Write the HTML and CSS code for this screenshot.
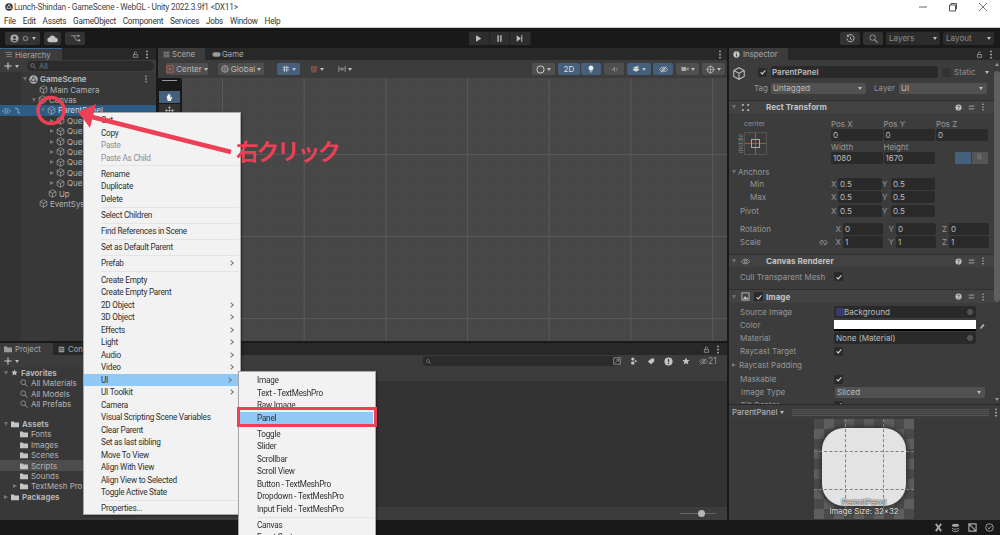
FILE: index.html
```html
<!DOCTYPE html>
<html lang="en">
<head>
<meta charset="utf-8">
<title>Lunch-Shindan - GameScene - WebGL - Unity 2022.3.9f1</title>
<link rel="stylesheet" href="styles.css">
</head>
<body>
<svg class="sprite" width="0" height="0">
  <symbol id="cube" viewBox="0 0 12 12"><path d="M6 1 10.5 3.4V8.6L6 11 1.5 8.6V3.4ZM1.5 3.4 6 5.8 10.5 3.4M6 5.8V11" fill="none" stroke="currentColor" stroke-width=".9"/></symbol>
  <symbol id="lock" viewBox="0 0 10 10"><path d="M2 5h6v4H2ZM3.4 5V2.8a1.6 1.6 0 0 1 3.2 0" fill="none" stroke="currentColor"/></symbol>
  <symbol id="dots" viewBox="0 0 4 10"><circle cx="2" cy="1.5" r="1" fill="currentColor"/><circle cx="2" cy="5" r="1" fill="currentColor"/><circle cx="2" cy="8.5" r="1" fill="currentColor"/></symbol>
  <symbol id="help" viewBox="0 0 10 10"><circle cx="5" cy="5" r="4.4" fill="currentColor"/><path d="M3.6 4a1.4 1.3 0 1 1 2 1.2C5 5.5 5 5.8 5 6.3M5 7.2v.9" fill="none" stroke="#3e3e3e"/></symbol>
  <symbol id="tune" viewBox="0 0 10 10"><path d="M1 3h5M8 3h1M1 7h1M4 7h5M7 1.5v3M3 5.5v3" fill="none" stroke="currentColor"/></symbol>
  <symbol id="folder" viewBox="0 0 10 8"><path d="M0 1h3.5l1 1H10v6H0Z" fill="currentColor"/></symbol>
  <symbol id="search" viewBox="0 0 10 10"><circle cx="4" cy="4" r="3" fill="none" stroke="currentColor"/><path d="M6.2 6.2 9.5 9.5" stroke="currentColor" stroke-width="1.2"/></symbol>
  <symbol id="check" viewBox="0 0 10 10"><path d="M2 5.4 4.1 7.4 8 2.8" fill="none" stroke="currentColor" stroke-width="1.3"/></symbol>
  <symbol id="eye" viewBox="0 0 12 8"><path d="M.6 4C3.6-.2 8.4-.2 11.4 4 8.4 8.2 3.6 8.2.6 4Z" fill="none" stroke="currentColor"/><circle cx="6" cy="4" r="1.7" fill="none" stroke="currentColor"/></symbol>
  <symbol id="target" viewBox="0 0 10 10"><circle cx="5" cy="5" r="3.8" fill="none" stroke="currentColor"/><circle cx="5" cy="5" r="1.2" fill="currentColor"/></symbol>
  <symbol id="unity" viewBox="0 0 12 12"><circle cx="6" cy="6" r="5.6" fill="currentColor"/><path d="M6 2.2 9.3 8H2.7Z" fill="none" stroke="#fff" stroke-width="1"/></symbol>
  <symbol id="star" viewBox="0 0 10 10"><path d="M5 .6 6.3 3.6 9.6 3.9 7.1 6 7.9 9.3 5 7.6 2.1 9.3 2.9 6 .4 3.9 3.7 3.6Z" fill="currentColor"/></symbol>
  <symbol id="plus" viewBox="0 0 10 10"><path d="M5 .5v9M.5 5h9" stroke="currentColor" stroke-width="1.3"/></symbol>
</svg>

<div class="window">
  <header class="titlebar">
    <svg class="title-icon"><use href="#unity"/></svg>
    <span class="title-text">Lunch-Shindan - GameScene - WebGL - Unity 2022.3.9f1 &lt;DX11&gt;</span>
    <div class="winctl">
      <svg viewBox="0 0 10 10"><path d="M1 5h8" stroke="#666"/></svg>
      <svg viewBox="0 0 10 10"><path d="M1.5 3h6v6h-6ZM3 3V1.5h5.5V7H7.500" fill="none" stroke="#555"/></svg>
      <svg viewBox="0 0 10 10"><path d="M1 1 9 9M9 1 1 9" stroke="#555" stroke-width=".8"/></svg>
    </div>
  </header>
  <nav class="menubar">
    <span>File</span><span>Edit</span><span>Assets</span><span>GameObject</span><span>Component</span><span>Services</span><span>Jobs</span><span>Window</span><span>Help</span>
  </nav>

  <div class="toolbar">
    <div class="tb-left">
      <div class="tb-btn tb-account"><svg class="i9" viewBox="0 0 10 10"><circle cx="5" cy="5" r="4.500" fill="#aaa"/><circle cx="5" cy="4" r="1.600" fill="#333"/><path d="M2.200 8a3 3 0 0 1 5.600 0" fill="#333"/></svg><svg class="i7" viewBox="0 0 10 10"><circle cx="5" cy="5" r="3" fill="none" stroke="#777" stroke-width="2"/></svg><i class="caret"></i></div>
      <div class="tb-btn tb-cloud"><svg class="i11" viewBox="0 0 12 8"><path d="M3 8a2.500 2.500 0 0 1-.4-5A3.500 3.500 0 0 1 9.300 3.200 2.400 2.400 0 0 1 9.500 8Z" fill="#c4c4c4"/></svg></div>
      <div class="tb-btn tb-vcs"><svg class="i11" viewBox="0 0 12 10"><path d="M1 2h3l3 5h3M4 2h5" fill="none" stroke="#999"/><circle cx="10" cy="7" r="1.300" fill="#999"/><circle cx="9.500" cy="2" r="1.200" fill="#999"/></svg></div>
    </div>
    <div class="tb-play">
      <div><svg class="i7" viewBox="0 0 10 10"><path d="M1.500 .5 9 5 1.500 9.500Z" fill="#c0c0c0"/></svg></div>
      <div><svg class="i7" viewBox="0 0 10 10"><path d="M2 .5h2v9H2ZM6 .5h2v9H6Z" fill="#c0c0c0"/></svg></div>
      <div><svg class="i7" viewBox="0 0 10 10"><path d="M1 .5 7 5 1 9.500ZM7.500 .5h1.500v9H7.500Z" fill="#c0c0c0"/></svg></div>
    </div>
    <div class="tb-right">
      <div class="tb-btn tb-hist"><svg class="i9" viewBox="0 0 10 10"><path d="M1.800 2.200A4 4 0 1 1 1 5M1.500 .8V2.700H3.400M5 3v2.300L6.500 6.300" fill="none" stroke="#c4c4c4"/></svg></div>
      <div class="tb-btn tb-hist"><svg class="i9 muted"><use href="#search"/></svg></div>
      <div class="tb-btn tb-drop tb-layers"><span>Layers</span><i class="caret"></i></div>
      <div class="tb-btn tb-drop tb-layout"><span>Layout</span><i class="caret"></i></div>
    </div>
  </div>

  <main class="workspace">
    <div class="left">
      <div class="top">
        <section class="hierarchy">
          <div class="tabstrip">
            <div class="tab tab-active tab-hier"><svg class="i7 muted" viewBox="0 0 10 10"><path d="M0 2h10M2 5h8M2 8h8" stroke="currentColor"/></svg><span>Hierarchy</span></div>
            <svg class="i7 strip-lock"><use href="#lock"/></svg><svg class="strip-dots"><use href="#dots"/></svg>
          </div>
          <div class="subbar hier-bar">
            <svg class="i8 plus"><use href="#plus"/></svg><i class="caret"></i>
            <div class="searchbox"><svg class="i6 muted"><use href="#search"/></svg><span>All</span></div>
          </div>
          <ul class="tree">
            <li class="ind1 row-bold"><i class="tri-d"></i><svg class="i9 bright" viewBox="0 0 10 10"><circle cx="5" cy="5" r="4.700" fill="currentColor"/><path d="M5 1.800 8 7H2Z" fill="none" stroke="#383838"/></svg><span>GameScene</span><svg class="row-dots"><use href="#dots"/></svg></li>
            <li class="ind2"><svg class="i9"><use href="#cube"/></svg><span>Main Camera</span></li>
            <li class="ind2b"><i class="tri-d"></i><svg class="i9"><use href="#cube"/></svg><span>Canvas</span></li>
            <li class="ind3 selected"><svg class="vis" viewBox="0 0 22 8"><use href="#eye" width="9" height="8" x="1"/><path d="M14 1l3 1v4h2" stroke="currentColor" fill="none"/></svg><i class="tri-d"></i><svg class="i9"><use href="#cube"/></svg><span>ParentPanel</span></li>
            <li class="ind4"><i class="tri-r"></i><svg class="i9"><use href="#cube"/></svg><span>Question1</span></li>
            <li class="ind4"><i class="tri-r"></i><svg class="i9"><use href="#cube"/></svg><span>Question2</span></li>
            <li class="ind4"><i class="tri-r"></i><svg class="i9"><use href="#cube"/></svg><span>Question3</span></li>
            <li class="ind4"><i class="tri-r"></i><svg class="i9"><use href="#cube"/></svg><span>Question4</span></li>
            <li class="ind4"><i class="tri-r"></i><svg class="i9"><use href="#cube"/></svg><span>Question5</span></li>
            <li class="ind4"><i class="tri-r"></i><svg class="i9"><use href="#cube"/></svg><span>Question6</span></li>
            <li class="ind4"><i class="tri-r"></i><svg class="i9"><use href="#cube"/></svg><span>Question7</span></li>
            <li class="ind5"><svg class="i9"><use href="#cube"/></svg><span>Up</span></li>
            <li class="ind6"><svg class="i9"><use href="#cube"/></svg><span>EventSystem</span></li>
          </ul>
        </section>

        <section class="scene">
          <div class="tabstrip">
            <div class="tab tab-active tab-scene"><svg class="i7 muted" viewBox="0 0 10 10"><path d="M3 0v10M7 0v10M0 3h10M0 7h10" stroke="currentColor"/></svg><span>Scene</span></div>
            <div class="tab tab-game"><svg class="i9 muted" viewBox="0 0 12 8"><rect x=".5" y="1" width="11" height="6" rx="3" fill="currentColor"/></svg><span>Game</span></div>
            <svg class="strip-dots"><use href="#dots"/></svg>
          </div>
          <div class="scene-bar">
            <div class="sb-btn sb-center"><svg class="i8" viewBox="0 0 10 10"><rect x="1" y="1" width="8" height="8" fill="none" stroke="#c0604a"/><circle cx="5" cy="5" r="1.500" fill="#c0604a"/></svg><span>Center</span><i class="caret"></i></div>
            <div class="sb-btn sb-global"><svg class="i8" viewBox="0 0 10 10"><circle cx="5" cy="5" r="4" fill="none" stroke="#bbb"/><path d="M1 5h8M5 1v8" stroke="#bbb" stroke-width=".6"/></svg><span>Global</span><i class="caret"></i></div>
            <div class="sb-btn sb-blue sb-snap"><svg class="i8" viewBox="0 0 10 10"><path d="M1 3h8M1 6h8M3 1v8M6 1v8" stroke="#ddd" stroke-width=".9"/></svg><i class="caret"></i></div>
            <div class="sb-btn sb-snap2"><svg class="i8" viewBox="0 0 10 10"><path d="M2 2h2v4a1 1 0 0 0 2 0V2h2v4a3 3 0 0 1-6 0Z" fill="none" stroke="#b9604c"/></svg><i class="caret"></i></div>
            <div class="sb-btn sb-snap3"><svg class="i8" viewBox="0 0 10 10"><path d="M1 1v8M9 1v8M4 3v4M6 3v4M1 5h8" stroke="#999"/></svg><i class="caret"></i></div>
            <div class="sb-right">
              <div class="sb-btn sb-w23"><svg class="i9" viewBox="0 0 10 10"><circle cx="5" cy="5" r="4" fill="none" stroke="#ddd"/></svg><i class="caret"></i></div>
              <div class="sb-btn sb-blue sb-2d"><span>2D</span></div>
              <div class="sb-btn sb-blue sb-w20"><svg class="i8" viewBox="0 0 10 10"><path d="M5 .5a3 3 0 0 1 2 5.300V7H3V5.800A3 3 0 0 1 5 .5ZM3.500 8.200h3v1h-3Z" fill="#eee"/></svg></div>
              <div class="sb-btn sb-w20 sb-gap"><svg class="i7" viewBox="0 0 10 10"><path d="M1 5h2l2-3v6M7 3l2 2-2 2" fill="none" stroke="#aaa"/></svg></div>
              <div class="sb-btn sb-blue sb-w24 sb-gap"><svg class="i8" viewBox="0 0 10 10"><path d="M1 6 5 4l4 2-4 2ZM1 4 5 2l4 2M7 .5v3M5.500 2h3" fill="#ddd" stroke="#ddd" stroke-width=".5"/></svg><i class="caret"></i></div>
              <div class="sb-btn sb-blue sb-w20 sb-gap2"><svg class="i9" viewBox="0 0 12 8"><use href="#eye" width="12" height="8"/><path d="M2 8 10 0" stroke="#ddd"/></svg></div>
              <div class="sb-btn sb-w23 sb-gap"><svg class="i8" viewBox="0 0 10 10"><path d="M.5 2.500h6v5h-6ZM7.500 4 9.500 3v4l-2-1Z" fill="#aaa"/></svg><i class="caret"></i></div>
              <div class="sb-btn sb-w23 sb-gap"><svg class="i9" viewBox="0 0 10 10"><circle cx="5" cy="5" r="3.500" fill="none" stroke="#bbb"/><path d="M5 0v10M0 5h10" stroke="#bbb" stroke-width=".7"/></svg><i class="caret"></i></div>
            </div>
          </div>
          <div class="viewport">
            <div class="palette">
              <div class="grip"></div>
              <div class="pal-btn pal-on"><svg class="i11" viewBox="0 0 10 10"><path d="M2 5V3.500a.6.6 0 0 1 1 0V5V1.800a.6.600 0 0 1 1 0V5V1.200a.6.600 0 0 1 1 0V5V2a.6.600 0 0 1 1 0V5.500L7 4.500a.6.600 0 0 1 1 .6L6.500 9H3Z" fill="#eee"/></svg></div>
              <div class="pal-btn"><svg class="i9" viewBox="0 0 10 10"><path d="M5 .5v9M.5 5h9M5 .5 4 2h2ZM5 9.500 4 8h2ZM.5 5 2 4v2ZM9.500 5 8 4v2Z" stroke="#bbb" stroke-width=".7" fill="#bbb"/></svg></div>
            </div>
          </div>
        </section>
      </div>

      <section class="project">
        <div class="tabstrip">
          <div class="tab tab-active tab-proj"><svg class="i8 muted"><use href="#folder"/></svg><span>Project</span></div>
          <div class="tab tab-console"><svg class="i7 muted" viewBox="0 0 10 10"><rect x="1" y="1" width="8" height="8" fill="currentColor"/><path d="M2 3.500h6M2 6h6" stroke="#282828"/></svg><span>Console</span></div>
          <svg class="i7 strip-lock"><use href="#lock"/></svg><svg class="strip-dots"><use href="#dots"/></svg>
        </div>
        <div class="subbar proj-bar">
          <svg class="i8 plus"><use href="#plus"/></svg><i class="caret"></i>
          <div class="proj-search"><svg class="i5 muted"><use href="#search"/></svg></div>
          <div class="proj-tools">
            <svg class="i8 muted" viewBox="0 0 10 10"><rect x="1" y="1" width="8" height="8" fill="none" stroke="currentColor"/><path d="M3 7 7 3M4.500 3H7v2.500" fill="none" stroke="currentColor"/></svg>
            <svg class="i8 tool" viewBox="0 0 10 10"><circle cx="3.500" cy="2.500" r="2" fill="currentColor"/><rect x="1.500" y="5.500" width="4" height="4" rx="1.500" fill="currentColor"/><path d="M6 3l3.500 3H6Z" fill="currentColor"/></svg>
            <svg class="i8 tool" viewBox="0 0 10 10"><path d="M1 5.500 5.500 2H9v3.500L5 9Z" fill="currentColor"/></svg>
            <svg class="i9 tool" viewBox="0 0 10 10"><circle cx="5" cy="5" r="4.500" fill="currentColor"/><path d="M5 2.200v3.500M5 6.800v1" stroke="#3c3c3c" stroke-width="1.300"/></svg>
            <svg class="i8 muted tool"><use href="#star"/></svg>
            <span class="hidden-count"><svg class="i9 muted" viewBox="0 0 12 8"><use href="#eye" width="12" height="8"/><path d="M2 8 10 0" stroke="currentColor"/></svg>21</span>
          </div>
        </div>
        <div class="proj-body">
          <ul class="ptree">
            <li class="p0 row-bold"><i class="tri-d"></i><svg class="i7 bright"><use href="#star"/></svg><span>Favorites</span></li>
            <li class="p1"><svg class="i8 muted"><use href="#search"/></svg><span>All Materials</span></li>
            <li class="p1"><svg class="i8 muted"><use href="#search"/></svg><span>All Models</span></li>
            <li class="p1"><svg class="i8 muted"><use href="#search"/></svg><span>All Prefabs</span></li>
            <li class="spacer"></li>
            <li class="p0 row-bold"><i class="tri-d"></i><svg class="i8 bright"><use href="#folder"/></svg><span>Assets</span></li>
            <li class="p1"><svg class="i8 bright"><use href="#folder"/></svg><span>Fonts</span></li>
            <li class="p1"><svg class="i8 bright"><use href="#folder"/></svg><span>Images</span></li>
            <li class="p1"><svg class="i8 bright"><use href="#folder"/></svg><span>Scenes</span></li>
            <li class="p1 psel"><svg class="i8 bright"><use href="#folder"/></svg><span>Scripts</span></li>
            <li class="p1"><svg class="i8 bright"><use href="#folder"/></svg><span>Sounds</span></li>
            <li class="p1t"><i class="tri-r"></i><svg class="i8 bright"><use href="#folder"/></svg><span>TextMesh Pro</span></li>
            <li class="p0 row-bold"><i class="tri-r"></i><svg class="i8 bright"><use href="#folder"/></svg><span>Packages</span></li>
          </ul>
          <div class="pmain">
            <div class="crumb"></div>
            <div class="pfiles"></div>
            <div class="pfoot"><div class="slider"><i></i></div></div>
          </div>
        </div>
      </section>
    </div>

    <aside class="inspector">
      <div class="tabstrip">
        <div class="tab tab-active tab-insp"><svg class="i7 bright" viewBox="0 0 10 10"><circle cx="5" cy="5" r="4.500" fill="currentColor"/><path d="M5 2v1M5 4.300V8" stroke="#3c3c3c" stroke-width="1.300"/></svg><span>Inspector</span></div>
        <svg class="i7 strip-lock"><use href="#lock"/></svg><svg class="strip-dots"><use href="#dots"/></svg>
      </div>
      <div class="insp-main">
        <div class="insp-scroll">
          <div class="obj-head">
            <svg class="obj-cube"><use href="#cube"/></svg>
            <div class="obj-rows">
              <div class="obj-row">
                <span class="chk"><svg><use href="#check"/></svg></span>
                <div class="field f-name">ParentPanel</div>
                <span class="chk chk-off"></span><span class="static">Static</span><i class="caret"></i>
              </div>
              <div class="obj-row obj-row2">
                <span class="lbl-tag">Tag</span><div class="select s-tag"><span>Untagged</span><i class="caret"></i></div>
                <span class="lbl-layer">Layer</span><div class="select s-layer"><span>UI</span><i class="caret"></i></div>
              </div>
            </div>
          </div>

          <div class="comp-head">
            <i class="tri-d"></i><svg class="i9 comp-ic" viewBox="0 0 10 10"><path d="M1 1h2v2H1ZM7 1h2v2H7ZM1 7h2v2H1ZM7 7h2v2H7Z" fill="currentColor"/></svg>
            <b class="comp-title">Rect Transform</b>
            <span class="comp-tools"><svg class="i7"><use href="#help"/></svg><svg class="i7"><use href="#tune"/></svg><svg class="strip-dots"><use href="#dots"/></svg></span>
          </div>
          <div class="rect-top">
            <div class="anchor">
              <span class="a-center">center</span>
              <div class="a-body"><span class="a-middle">middle</span>
                <div class="a-box"><i class="a-h"></i><i class="a-v"></i><i class="a-in"></i></div>
              </div>
            </div>
            <div class="rect-grid">
              <span>Pos X</span><span>Pos Y</span><span>Pos Z</span>
              <div class="field">0</div><div class="field">0</div><div class="field">0</div>
              <span>Width</span><span>Height</span><span></span>
              <div class="field">1080</div><div class="field">1670</div>
              <div class="bp-btns"><i class="bp-a"></i><i class="bp-b">R</i></div>
            </div>
          </div>

          <div class="prop anchors-label"><i class="tri-d"></i><span>Anchors</span></div>
          <div class="prop prop-sub"><span class="plabel">Min</span><div class="vec2"><em>X</em><div class="field">0.5</div><em>Y</em><div class="field">0.5</div></div></div>
          <div class="prop prop-sub"><span class="plabel">Max</span><div class="vec2"><em>X</em><div class="field">0.5</div><em>Y</em><div class="field">0.5</div></div></div>
          <div class="prop prop-pivot"><span class="plabel">Pivot</span><div class="vec2"><em>X</em><div class="field">0.5</div><em>Y</em><div class="field">0.5</div></div></div>
          <div class="prop prop-rot"><span class="plabel">Rotation</span><div class="vec3"><em>X</em><div class="field">0</div><em>Y</em><div class="field">0</div><em>Z</em><div class="field">0</div></div></div>
          <div class="prop"><span class="plabel">Scale</span><svg class="link" viewBox="0 0 10 8"><path d="M4 2H3a2 2 0 0 0 0 4h1M6 2h1a2 2 0 0 1 0 4H6M3 1 7 7" fill="none" stroke="currentColor"/></svg><div class="vec3"><em>X</em><div class="field">1</div><em>Y</em><div class="field">1</div><em>Z</em><div class="field">1</div></div></div>

          <div class="comp-head comp-canvas">
            <i class="tri-d"></i><svg class="i9 comp-ic" viewBox="0 0 12 8"><use href="#eye" width="12" height="8"/></svg>
            <b class="comp-title">Canvas Renderer</b>
            <span class="comp-tools"><svg class="i7"><use href="#help"/></svg><svg class="i7"><use href="#tune"/></svg><svg class="strip-dots"><use href="#dots"/></svg></span>
          </div>
          <div class="prop prop-cull"><span class="plabel">Cull Transparent Mesh</span><span class="chk"><svg><use href="#check"/></svg></span></div>

          <div class="comp-head comp-image">
            <i class="tri-d"></i><svg class="i9 comp-ic" viewBox="0 0 10 10"><rect x="1" y="1" width="8" height="8" fill="none" stroke="currentColor"/><path d="M2 8 4.500 4.500 6 6.500 7 5.500 8 8Z" fill="currentColor"/></svg>
            <span class="chk chk-comp"><svg><use href="#check"/></svg></span>
            <b class="comp-title comp-title2">Image</b>
            <span class="comp-tools"><svg class="i7"><use href="#help"/></svg><svg class="i7"><use href="#tune"/></svg><svg class="strip-dots"><use href="#dots"/></svg></span>
          </div>
          <div class="prop prop-img"><span class="plabel">Source Image</span><div class="field f-wide"><i class="sprite-ic"></i>Background<svg class="i6 f-pick"><use href="#target"/></svg></div></div>
          <div class="prop prop-img"><span class="plabel">Color</span><div class="color"></div><svg class="i7 dropper" viewBox="0 0 10 10"><path d="M1 9 6 3l2 1.500L3 9.500Z" fill="#bbb"/></svg></div>
          <div class="prop prop-img"><span class="plabel">Material</span><div class="field f-wide">None (Material)<svg class="i6 f-pick"><use href="#target"/></svg></div></div>
          <div class="prop prop-img"><span class="plabel">Raycast Target</span><span class="chk"><svg><use href="#check"/></svg></span></div>
          <div class="prop prop-img prop-pad"><i class="tri-r"></i><span class="plabel">Raycast Padding</span></div>
          <div class="prop prop-img prop-mask"><span class="plabel">Maskable</span><span class="chk"><svg><use href="#check"/></svg></span></div>
          <div class="prop prop-img"><span class="plabel plabel-in">Image Type</span><div class="select s-type"><span>Sliced</span><i class="caret"></i></div></div>
          <div class="prop prop-img"><span class="plabel plabel-in">Fill Center</span><span class="chk"><svg><use href="#check"/></svg></span></div>
        </div>
        <div class="scrollbar"><i class="sb-up"></i><div class="sb-track"><div class="sb-thumb"></div></div><i class="sb-down"></i></div>
      </div>
      <div class="preview-bar"><span>ParentPanel</span><i class="caret"></i><div class="grab"></div><svg class="strip-dots"><use href="#dots"/></svg></div>
      <div class="preview">
        <div class="checker">
          <div class="thumb"></div>
          <i class="d-v d-v1"></i><i class="d-v d-v2"></i><i class="d-h d-h1"></i><i class="d-h d-h2"></i>
          <p class="cap">ParentPanel<br>Image Size: 32x32</p>
        </div>
      </div>
    </aside>
  </main>

  <footer class="statusbar">
    <svg class="i9" viewBox="0 0 10 10"><path d="M2 1 8 9M8 1 2 9" stroke="currentColor" stroke-width="2"/></svg>
    <svg class="i9" viewBox="0 0 10 10"><ellipse cx="5" cy="2.500" rx="4" ry="1.800" fill="currentColor"/><path d="M1 5.500c1 2 7 2 8 0M1 8c1 2 7 2 8 0" fill="none" stroke="currentColor"/></svg>
    <svg class="i9" viewBox="0 0 10 10"><path d="M1 1h8v8H1ZM1 1 9 9" fill="none" stroke="currentColor" stroke-width="1.300"/></svg>
    <svg class="i9" viewBox="0 0 10 10"><circle cx="5" cy="5" r="4.200" fill="none" stroke="currentColor"/><path d="M3 5 4.500 6.500 7 3.500" fill="none" stroke="currentColor"/></svg>
  </footer>

  <div class="menu">
    <div class="mi">Cut</div>
    <div class="mi">Copy</div>
    <div class="mi off">Paste</div>
    <div class="mi off">Paste As Child</div>
    <hr>
    <div class="mi">Rename</div>
    <div class="mi">Duplicate</div>
    <div class="mi">Delete</div>
    <hr>
    <div class="mi">Select Children</div>
    <hr>
    <div class="mi">Find References in Scene</div>
    <hr>
    <div class="mi">Set as Default Parent</div>
    <hr>
    <div class="mi sub">Prefab</div>
    <hr>
    <div class="mi">Create Empty</div>
    <div class="mi">Create Empty Parent</div>
    <div class="mi sub">2D Object</div>
    <div class="mi sub">3D Object</div>
    <div class="mi sub">Effects</div>
    <div class="mi sub">Light</div>
    <div class="mi sub">Audio</div>
    <div class="mi sub">Video</div>
    <div class="mi sub hot">UI</div>
    <div class="mi sub">UI Toolkit</div>
    <div class="mi">Camera</div>
    <div class="mi">Visual Scripting Scene Variables</div>
    <div class="mi">Clear Parent</div>
    <div class="mi">Set as last sibling</div>
    <div class="mi">Move To View</div>
    <div class="mi">Align With View</div>
    <div class="mi">Align View to Selected</div>
    <div class="mi">Toggle Active State</div>
    <hr>
    <div class="mi">Properties...</div>
  </div>

  <div class="menu submenu">
    <div class="mi">Image</div>
    <div class="mi">Text - TextMeshPro</div>
    <div class="mi">Raw Image</div>
    <div class="mi hot">Panel</div>
    <hr>
    <div class="mi">Toggle</div>
    <div class="mi">Slider</div>
    <div class="mi">Scrollbar</div>
    <div class="mi">Scroll View</div>
    <div class="mi">Button - TextMeshPro</div>
    <div class="mi">Dropdown - TextMeshPro</div>
    <div class="mi">Input Field - TextMeshPro</div>
    <hr>
    <div class="mi">Canvas</div>
    <div class="mi">Event System</div>
  </div>

  <div class="panel-mark"></div>
  <svg class="annot" viewBox="0 0 1000 535">
    <circle cx="51" cy="110.500" r="13" fill="none" stroke="#ef3f56" stroke-width="3.500"/>
    <path d="M231 152 92 117" stroke="#ef3f56" stroke-width="4.500" fill="none"/>
    <path d="M78 112 96 104 90 128Z" fill="#ef3f56"/>
  </svg>
  <div class="annot-text">右クリック</div>
</div>
</body>
</html>
```
FILE: styles.css
```css
* { box-sizing: border-box; }
html, body { margin: 0; padding: 0; background: #191919; }
body { width: 1000px; height: 535px; overflow: hidden; font-family: "Inter", "Liberation Sans", sans-serif; font-size: 8px; color: #bdbdbd; }
ul { list-style: none; margin: 0; padding: 0; }
i, em, b { font-style: normal; }
svg { display: block; flex: none; }
.sprite { position: absolute; }

.window { position: relative; width: 1000px; height: 535px; overflow: hidden; display: flex; flex-direction: column; filter: blur(.3px); }

.i5 { width: 5px; height: 5px; } .i6 { width: 6px; height: 6px; } .i7 { width: 7px; height: 7px; } .i8 { width: 8px; height: 8px; }
.i9 { width: 9px; height: 9px; } .i11 { width: 11px; height: 9px; }
.muted { color: #9a9a9a; } .bright { color: #c4c4c4; }

.titlebar { height: 15px; flex: none; background: #fff; display: flex; align-items: center; padding: 0 0 1px 5px; color: #444; font-family: Roboto, "Liberation Sans", sans-serif; font-size: 8.300px; letter-spacing: -.2px; }
.title-icon { width: 8px; height: 8px; color: #333; margin-right: 1px; }
.title-text { flex: 1; white-space: nowrap; }
.winctl { display: flex; gap: 20px; padding-right: 12px; }
.winctl svg { width: 10px; height: 10px; }

.menubar { height: 13px; flex: none; background: #fff; border-bottom: 1px solid #ccc; display: flex; padding-left: 4px; gap: 6.800px; color: #333; font-family: Roboto, "Liberation Sans", sans-serif; font-size: 8.200px; letter-spacing: -.22px; line-height: 13px; }

.toolbar { height: 20px; flex: none; background: #191919; display: flex; align-items: center; position: relative; }
.tb-left, .tb-right { display: flex; gap: 4px; }
.tb-left { padding-left: 5px; }
.tb-right { margin-left: auto; padding-right: 6px; gap: 3px; }
.tb-btn { height: 13px; background: #333; border-radius: 2px; display: flex; align-items: center; justify-content: center; gap: 3px; }
.tb-account { width: 35px; } .tb-cloud { width: 17px; } .tb-vcs { width: 20px; }
.tb-hist { width: 20px; }
.tb-drop { justify-content: space-between; padding: 0 3px; color: #8c8c8c; font-size: 8.100px; background: #2c2c2c; }
.tb-layers { width: 54px; } .tb-layout { width: 51px; }
.tb-play { display: flex; height: 13px; margin-left: 384px; }
.tb-play div { width: 20.500px; background: #2e2e2e; display: flex; align-items: center; justify-content: center; border-right: 1px solid #222; }
.caret { display: inline-block; flex: none; width: 0; height: 0; border: 2.500px solid transparent; border-top: 3px solid #bdbdbd; border-bottom: 0; }

.workspace { height: 472px; flex: none; display: flex; gap: 2px; background: #191919; }
.left { width: 727px; flex: none; display: flex; flex-direction: column; gap: 2px; }
.top { height: 293px; flex: none; display: flex; gap: 2px; }

.tabstrip { height: 12px; flex: none; background: #282828; display: flex; align-items: stretch; position: relative; }
.tab { display: flex; align-items: center; gap: 3px; color: #a8a8a8; font-size: 7.800px; }
.tab-active { background: #3c3c3c; }
.tab-hier { width: 62px; padding-left: 5px; border-top: 1px solid #3a6a9a; }
.tab-scene { width: 47px; padding-left: 5px; gap: 2px; }
.tab-game { width: 40px; padding-left: 7px; gap: 1px; }
.tab-proj { width: 53px; padding-left: 4px; }
.tab-console { width: 60px; padding-left: 5px; }
.tab-insp { width: 59px; padding-left: 4px; }
.strip-lock { margin-left: auto; align-self: center; color: #aaa; }
.strip-dots { width: 4px; height: 9px; color: #b0b0b0; align-self: center; margin: 0 2px 0 6px; }
.tabstrip > .strip-dots:only-of-type { margin-left: auto; margin-right: 5px; }
.tabstrip .strip-lock + .strip-dots { margin: 0 7px 0 6px; }

.subbar { height: 12px; flex: none; background: #3c3c3c; display: flex; align-items: center; }
.plus { margin-left: 4px; color: #ccc; }
.subbar .caret { margin-left: 3px; }

.hierarchy { width: 156px; flex: none; display: flex; flex-direction: column; background: #383838; }
.searchbox { margin-left: 8px; width: 127px; height: 10px; background: #2b2b2b; border-radius: 5px; display: flex; align-items: center; gap: 3px; padding-left: 3px; color: #777; font-size: 7.500px; }
.tree { padding-top: 1.900px; flex: 1; background: linear-gradient(90deg, #333 21px, #383838 21px); }
.tree li, .ptree li { height: 10.420px; display: flex; align-items: center; gap: 2px; white-space: nowrap; color: #b4b4b4; font-size: 7.900px; position: relative; }
.tree svg.i9 { color: #b0b0b0; width: 9px; height: 9px; }
.row-bold { font-weight: 700; }
.row-dots { width: 4px; height: 8px; margin-left: auto; margin-right: 8px; color: #bbb; }
.tri-d, .tri-r { display: inline-block; flex: none; width: 0; height: 0; border-style: solid; border-color: transparent; }
.tri-d { border-width: 4px 2.500px 0; border-top-color: #6f6f6f; }
.tri-r { border-width: 2.500px 0 2.500px 4px; border-left-color: #7a7a7a; }
.ind1 { padding-left: 23px; }
.ind2 { padding-left: 39px; }
.ind2b { padding-left: 32px; }
.ind3 { padding-left: 41px; }
.ind4 { padding-left: 50px; }
.ind5 { padding-left: 48px; }
.ind6 { padding-left: 39px; }
.tree .selected { background: #2c5d87; color: #d6d6d6; }
.vis { position: absolute; left: 1px; top: 1.500px; width: 22px; height: 8px; color: #8fa8bc; }

.scene { flex: 1; display: flex; flex-direction: column; min-width: 0; }
.scene-bar { height: 18px; flex: none; background: #3c3c3c; display: flex; align-items: center; padding-left: 8px; }
.sb-btn { height: 12.500px; background: #4f4f4f; border-radius: 2px; display: flex; align-items: center; justify-content: center; gap: 2px; color: #b8b8b8; font-size: 8.100px; }
.sb-blue { background: #46607c; color: #ddd; }
.sb-center { width: 42px; }
.sb-global { width: 46px; margin-left: 10px; }
.sb-snap { width: 23px; margin-left: 13px; }
.sb-snap2 { width: 23px; margin-left: 5px; background: #3c3c3c; }
.sb-snap3 { width: 23px; margin-left: 5px; background: #3c3c3c; }
.sb-right { margin-left: auto; display: flex; padding-right: 2px; }
.sb-w23 { width: 23px; } .sb-w20 { width: 20px; } .sb-w24 { width: 24px; } .sb-2d { width: 23px; margin-left: 3px; border-right: 1px solid #3c3c3c; }
.sb-gap { margin-left: 3px; } .sb-gap2 { margin-left: 2px; }
.viewport { flex: 1; position: relative; background-color: #474747;
  background-image:
    linear-gradient(90deg, #585858 1px, transparent 1px),
    linear-gradient(#585858 1px, transparent 1px),
    linear-gradient(90deg, #494949 1px, transparent 1px),
    linear-gradient(#494949 1px, transparent 1px);
  background-size: 81.700px 100%, 100% 82px, 16.340px 100%, 100% 16.400px;
  background-position: 64px 0, 0 76px, 64px 0, 0 76px; }
.palette { margin-left: -1px; width: 25px; height: 60px; background: #191919; border-radius: 2px; padding: 1px 2px; }
.grip { height: 11px; margin: 1px 3px 0; border-top: 1px solid #999; }
.pal-btn { height: 12px; display: flex; align-items: center; justify-content: center; background: #333; margin-bottom: 1px; }
.pal-on { background: #46607c; }

.project { flex: 1; display: flex; flex-direction: column; }
.proj-bar { position: relative; }
.proj-search { margin-left: 404px; width: 196px; height: 10px; background: #2b2b2b; border-radius: 3px; display: flex; align-items: center; padding-left: 3px; }
.proj-tools { display: flex; align-items: center; margin-left: -6px; gap: 9px; padding-left: 0; color: #c0c0c0; flex: 1; }
.tool { color: #c4c4c4; }
.hidden-count { display: flex; align-items: center; gap: 0; color: #999; font-size: 8.500px; }
.proj-body { flex: 1; display: flex; background: #383838; min-height: 0; }
.ptree { width: 135px; flex: none; padding-top: .600px; border-right: 0; overflow: hidden; }
.ptree li { overflow: hidden; }
.ptree li.spacer { height: 9.500px; }
.p0 { padding-left: 4px; gap: 3px !important; }
.p1 { padding-left: 20px; gap: 3px !important; }
.p1t { padding-left: 13px; gap: 3px !important; }
.psel { background: #4d4d4d; }
.pmain { flex: 1; display: flex; flex-direction: column; }
.crumb { height: 14px; flex: none; background: #3c3c3c; }
.pfiles { flex: 1; background: #333; }
.pfoot { height: 13px; flex: none; background: #3c3c3c; display: flex; align-items: center; justify-content: flex-end; padding-right: 11px; }
.slider { width: 36px; height: 1px; background: #666; position: relative; }
.slider i { position: absolute; left: 18px; top: -3px; width: 7px; height: 7px; border-radius: 50%; background: #b4b4b4; }

.inspector { flex: 1; display: flex; flex-direction: column; background: #3c3c3c; min-width: 0; }
.insp-main { height: 344px; flex: none; display: flex; overflow: hidden; }
.insp-scroll { flex: 1; min-width: 0; padding-right: 0; overflow: hidden; }
.scrollbar { width: 6px; flex: none; display: flex; flex-direction: column; background: #3c3c3c; align-items: center; }
.sb-up, .sb-down { width: 0; height: 0; border: 2.500px solid transparent; flex: none; margin: 3px 0; }
.sb-up { border-bottom: 3px solid #999; border-top: 0; }
.sb-down { border-top: 3px solid #999; border-bottom: 0; }
.sb-track { flex: 1; width: 100%; }
.sb-thumb { height: 231px; margin-top: 2px; background: #5f5f5f; border-radius: 3px; }

.obj-head { height: 40px; display: flex; }
.obj-cube { width: 14px; height: 15px; color: #c0c0c0; margin: 6px 0 0 3px; }
.obj-rows { padding-left: 12px; flex: 1; }
.obj-row { height: 12px; margin-top: 6px; display: flex; align-items: center; }
.obj-row2 { margin-top: 4px; }
.chk { width: 9px; height: 9px; flex: none; background: #2a2a2a; border-radius: 1px; display: flex; align-items: center; justify-content: center; color: #ddd; }
.chk svg { width: 8px; height: 8px; }
.chk-off { background: #333; margin-left: 4px; }
.field { height: 12px; background: #2a2a2a; border-radius: 2px; color: #bdbdbd; font-size: 8px; line-height: 12px; padding-left: 2px; white-space: nowrap; }
.f-name { width: 167px; margin-left: 4px; font-weight: 600; padding-left: 1px; }
.static { margin-left: 3px; color: #8c8c8c; font-size: 8.100px; }
.obj-row > .caret { margin-left: 9px; }
.lbl-tag { width: 17px; margin-left: -4px; color: #969696; font-size: 8px; }
.lbl-layer { margin-left: 8px; width: 25px; color: #969696; font-size: 8px; }
.select { height: 11px; background: #515151; border-radius: 2px; display: flex; align-items: center; justify-content: space-between; padding: 0 4px 0 2px; color: #bdbdbd; font-size: 8px; }
.s-tag { width: 95px; } .s-layer { width: 88px; }

.comp-head { height: 13px; margin-top: 0; border-top: 1px solid #2f2f2f; display: flex; align-items: center; background: #424242; }
.comp-head .tri-d { margin-left: 3px; }
.comp-ic { margin-left: 5px; color: #bdbdbd; }
.comp-title { margin-left: 16px; font-size: 8.100px; color: #c4c4c4; font-weight: 700; }
.comp-title2 { margin-left: 3px; }
.chk-comp { margin-left: 4px; }
.comp-tools { margin-left: auto; display: flex; align-items: center; gap: 6px; padding-right: 9px; color: #c0c0c0; }
.comp-tools .strip-dots { margin: 0; height: 8px; }

.rect-top { display: flex; height: 51px; padding-top: 6px; }
.anchor { width: 102px; flex: none; padding-left: 15px; }
.a-center { display: block; color: #8e8e8e; font-size: 7px; line-height: 9px; }
.a-body { display: flex; margin-top: 4px; margin-left: -7px; gap: 1px; }
.a-middle { writing-mode: vertical-rl; transform: rotate(180deg); font-size: 6px; color: #888; width: 6px; text-align: center; }
.a-box { position: relative; width: 23px; height: 23px; border: 1px solid #555; }
.a-h { position: absolute; left: 0; right: 0; top: 10px; height: 1px; background: #b5503e; }
.a-v { position: absolute; top: 0; bottom: 0; left: 10px; width: 1px; background: #b5503e; }
.a-in { position: absolute; left: 6px; top: 6px; width: 9px; height: 9px; border: 1px solid #a8a8a8; }
.rect-grid { width: 158px; display: grid; grid-template-columns: 51.500px 51.500px 51.500px; column-gap: 1px; grid-template-rows: 10px 12px 11px 12px; color: #9a9a9a; font-size: 8px; line-height: 10px; align-items: end; }
.bp-btns { display: flex; justify-content: flex-end; gap: 1px; height: 12px; }
.bp-a { width: 16px; background: #46607c; }
.bp-b { width: 16px; background: #555; color: #888; font-size: 7px; text-align: center; line-height: 12px; }

.prop { height: 13px; display: flex; align-items: center; padding-left: 11px; color: #979797; font-size: 8px; white-space: nowrap; position: relative; }
.plabel { width: 91px; flex: none; }
.prop > .link { position: absolute; left: 90px; top: 3.500px; width: 9px; height: 7px; color: #999; }
.anchors-label { padding-left: 3px; gap: 2px; height: 10px; margin-top: 3px; }
.prop-sub { padding-left: 0; height: 13px; }
.prop-sub .plabel { padding-left: 21px; width: 102px; }
.prop-pivot { margin-top: 1px; }
.prop-rot { margin-top: 5px; }
.vec2 { display: grid; grid-template-columns: 7px 44px 9px 44px; align-items: center; }
.vec3 { display: grid; grid-template-columns: 12px 40px 13px 40px 13px 40px; align-items: center; }
.vec2 em, .vec3 em { color: #999; font-size: 8px; text-align: right; padding-right: 1px; }
.vec2 em { text-align: left; }
.vec3 em { padding-right: 2px; }

.comp-canvas { margin-top: 6px; }
.prop-cull { margin-top: 3px; }
.prop-cull .plabel { width: 94px; }
.comp-image { margin-top: 6px; height: 14px; }
.prop-img { height: 13px; }
.prop-img .plabel { width: 94px; }
.comp-image + .prop-img { margin-top: 2.500px; }
.prop-pad { padding-left: 3px; gap: 3px; margin-top: .500px; }
.prop-mask { margin-top: 1.500px; }
.prop-img .plabel-in { padding-left: 1px; }
.prop .chk { margin-left: 0; }
.f-wide { width: 142px; position: relative; padding-left: 2px; font-size: 8.100px; display: flex; align-items: center; }
.f-pick { margin-left: auto; margin-right: 3px; color: #aaa; }
.sprite-ic { width: 8px; height: 8px; background: #3c3a6a; flex: none; }
.color { width: 142px; height: 11px; background: #fff; border-bottom: 2px solid #000; }
.dropper { margin-left: 3px; }
.s-type { width: 150px; margin-left: 1px; }

.preview-bar { height: 15px; flex: none; background: #3c3c3c; border-top: 1px solid #282828; display: flex; align-items: center; padding-left: 3px; color: #bdbdbd; font-size: 8px; gap: 3px; }
.grab { flex: 1; height: 7px; margin-left: 5px; background: repeating-linear-gradient(#555 0 1px, #3c3c3c 1px 2px); }
.preview-bar .strip-dots { margin: 0 2px; }
.preview { flex: 1; background: #3a3a3a; display: flex; justify-content: center; min-height: 0; padding-right: 1px; }
.checker { position: relative; width: 100px; height: 100px; background-color: #4a4a4a; background-image: conic-gradient(#5e5e5e 25%, #4a4a4a 0 50%, #5e5e5e 0 75%, #4a4a4a 0); background-size: 20px 20px; }
.thumb { position: absolute; left: 8px; top: 9px; width: 84px; height: 78px; border-radius: 22px; background: #e3e3e3; box-shadow: 0 0 4px 2px #333; }
.d-v { position: absolute; top: 0; bottom: 6px; width: 0; border-left: 1px dashed #808080; }
.d-v1 { left: 31px; } .d-v2 { left: 69px; }
.d-h { position: absolute; left: 0; right: 0; height: 0; border-top: 1px dashed #808080; }
.d-h1 { top: 32px; } .d-h2 { top: 70px; }
.cap { position: absolute; left: 0; right: 0; bottom: 3px; margin: 0; text-align: center; color: #e6e6e6; font-size: 7.800px; line-height: 9px; text-shadow: 0 0 2px #222, 0 0 1px #222; white-space: nowrap; }

.statusbar { flex: 1; background: #191919; display: flex; align-items: center; justify-content: flex-end; gap: 8px; padding-right: 6px; color: #a8a8a8; }

.menu { position: absolute; left: 83px; top: 112px; width: 158px; height: 403px; background: #f2f2f2; border: 1px solid #a8a8a8; box-shadow: 1px 1px 2px rgba(0,0,0,.4); padding-top: 1px; font-family: Roboto, "Liberation Sans", sans-serif; font-size: 8.200px; letter-spacing: -.23px; color: #2e2e2e; }
.mi { height: 12.500px; line-height: 12.500px; padding-left: 17px; white-space: nowrap; position: relative; }
.mi.off { color: #8d8d8d; }
.mi.sub::after { content: ""; position: absolute; right: 7px; top: 4px; width: 3px; height: 3px; border-top: 1px solid #777; border-right: 1px solid #777; transform: rotate(45deg); }
.mi.hot { background: #90c8f6; margin-right: 2px; }
.menu hr { height: 3.700px; margin: 0 1px 0 17px; border: 0; background: linear-gradient(#e4e4e4, #e4e4e4) center / 100% 1px no-repeat; }
.submenu { left: 238px; top: 371px; width: 138px; height: 175px; padding-top: 2px; }
.submenu .mi { padding-left: 18px; }
.submenu .mi.hot { margin: 0 2px 0 1px; padding-left: 17px; }
.submenu hr { margin-left: 18px; }

.panel-mark { position: absolute; left: 237px; top: 407px; width: 140px; height: 20px; border: 3px solid #ef3f56; }
.annot { position: absolute; left: 0; top: 0; width: 1000px; height: 535px; pointer-events: none; }
.annot-text { position: absolute; left: 236px; top: 133px; color: #ef3f56; font-family: "Noto Sans CJK JP", sans-serif; font-weight: 700; font-size: 23px; line-height: 34px; letter-spacing: -2.500px; white-space: nowrap; }
```
